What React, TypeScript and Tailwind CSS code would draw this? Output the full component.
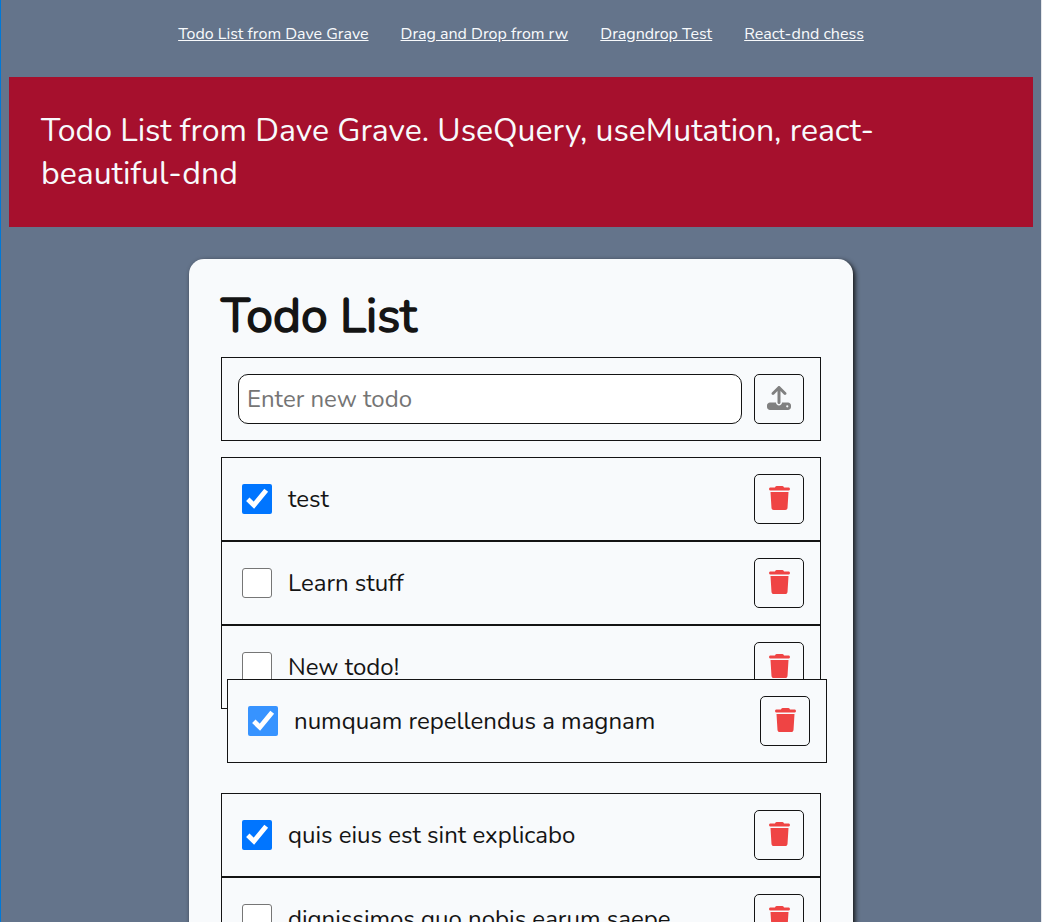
import type { ReactNode } from "react";
import { FaTrash, FaUpload } from "react-icons/fa6";

type Todo = { title: string; done: boolean; dragging?: boolean };

const links = ["Todo List from Dave Grave", "Drag and Drop from rw", "Dragndrop Test", "React-dnd chess"];

const todos: Todo[] = [
  { title: "test", done: true },
  { title: "Learn stuff", done: false },
  { title: "New todo!", done: false },
  { title: "numquam repellendus a magnam", done: true, dragging: true },
  { title: "quis eius est sint explicabo", done: true },
  { title: "dignissimos quo nobis earum saepe", done: false },
];

function Checkbox({ checked, hovered }: { checked: boolean; hovered?: boolean }) {
  if (!checked) {
    return <span role="checkbox" aria-checked="false" className="size-[30px] shrink-0 rounded-[3px] border border-[#767676] bg-white" />;
  }
  return (
    <span role="checkbox" aria-checked="true" className={`size-[30px] shrink-0 rounded-[2px] ${hovered ? "bg-[#3793ff]" : "bg-[#0075ff]"}`}>
      <svg viewBox="0 0 30 30" className="block size-full">
        <path d="M5.8 15.3L11.9 21.2L24.2 6.2" fill="none" stroke="white" strokeWidth="4.9" />
      </svg>
    </span>
  );
}

function IconButton({ label, children, className }: { label: string; children: ReactNode; className: string }) {
  return (
    <button aria-label={label} className={`flex size-[50px] shrink-0 items-center justify-center rounded-[5px] border border-[#141414] bg-[#f8fafc] pb-[2px] text-2xl ${className}`}>
      {children}
    </button>
  );
}

function TodoRow({ todo }: { todo: Todo }) {
  return (
    <li className={`flex h-[84px] shrink-0 items-center border border-[#141414] bg-[#f8fafc] py-4 pr-4 pl-5 ${todo.dragging ? "relative top-[-30px] left-[6px] z-10" : ""}`}>
      <Checkbox checked={todo.done} hovered={todo.dragging} />
      <span className="ml-4 flex-1 text-2xl whitespace-nowrap">{todo.title}</span>
      <IconButton label="Delete todo" className="pl-px text-[#ef4444]">
        <FaTrash className="h-6 w-[21px]" />
      </IconButton>
    </li>
  );
}

export default function App() {
  return (
    <div className="flex h-[922px] flex-col overflow-hidden border-r border-l border-r-[#e5e7eb] border-l-[#0078d7] bg-[#64748b] px-2 font-['Nunito','Lato',sans-serif] text-[#141414]">
      <nav className="flex h-[77px] shrink-0 justify-center gap-8 pt-[22px] text-base text-[#f8fafc]">
        {links.map((link) => (
          <a key={link} className="block h-6 whitespace-nowrap underline">{link}</a>
        ))}
      </nav>
      <header className="h-[150px] shrink-0 bg-[#a6102d] px-8 pt-8 text-[32px] leading-[43px] text-[#f8fafc]">
        Todo List from Dave Grave. UseQuery, useMutation, react-beautiful-dnd
      </header>
      <main className="mx-auto mt-8 flex h-[900px] w-[664px] shrink-0 flex-col rounded-t-[15px] bg-[#f8fafc] px-8 pt-6 shadow-[2px_2px_5px_#141414]">
        <h1 className="h-[66px] text-5xl leading-[66px] font-normal [-webkit-text-stroke:1.5px_#141414]">Todo List</h1>
        <form className="mt-2 flex h-[84px] shrink-0 items-center gap-3 border border-[#141414] p-4">
          <input placeholder="Enter new todo" className="h-[50px] min-w-0 flex-1 rounded-[10px] border border-[#141414] bg-white px-2 text-2xl placeholder:text-[#757575]" />
          <IconButton label="Add todo" className="text-[#808080]">
            <FaUpload />
          </IconButton>
        </form>
        <ul className="mt-4 flex flex-col">
          {todos.map((todo) => (
            <TodoRow key={todo.title} todo={todo} />
          ))}
        </ul>
      </main>
    </div>
  );
}
